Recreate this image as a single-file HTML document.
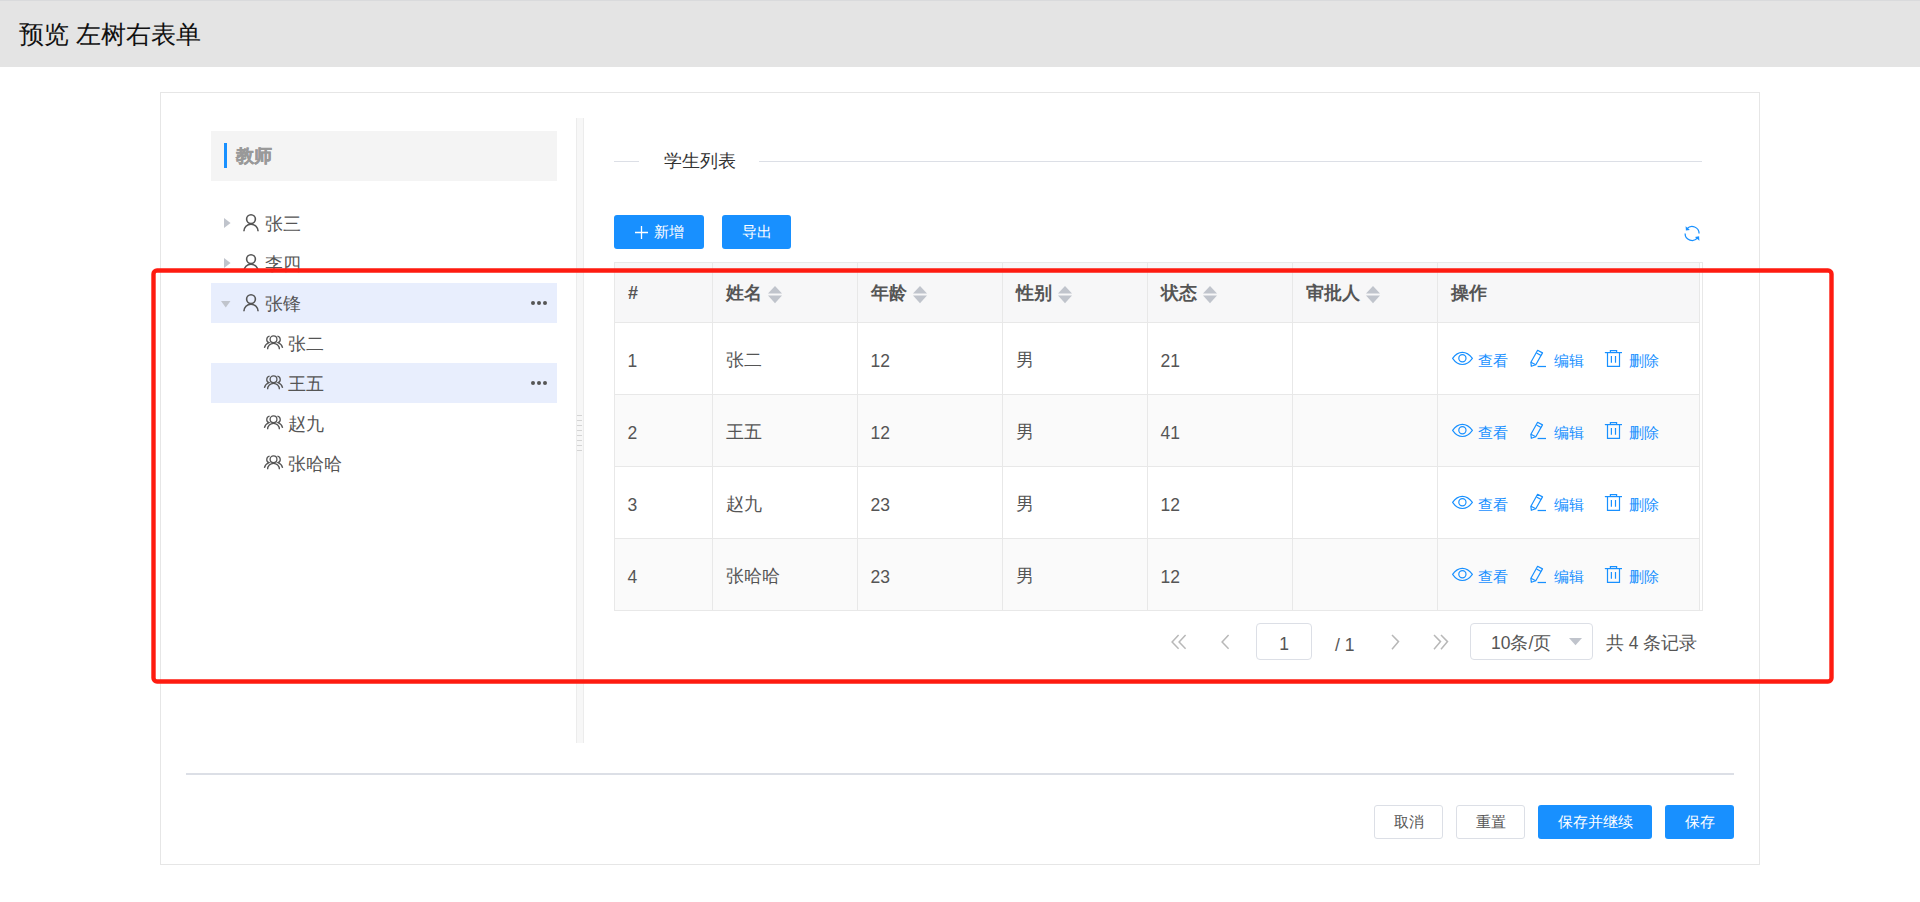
<!DOCTYPE html>
<html><head><meta charset="utf-8"><style>
*{box-sizing:border-box;margin:0;padding:0}
html,body{width:1920px;height:902px;overflow:hidden;background:#fff;font-family:"Liberation Sans",sans-serif;color:#555}
.a{position:absolute}
.hdr{left:0;top:0;width:1920px;height:67px;background:#e4e4e4;border-top:1px solid #d9dadc}
.ttl{left:19px;top:18px;font-size:25px;line-height:32px;color:#111;white-space:nowrap}
.card{left:160px;top:92px;width:1600px;height:773px;border:1px solid #e6e6e6}
.tbox{left:211px;top:131px;width:346px;height:50px;background:#f4f4f4}
.bar{left:224px;top:143px;width:3px;height:25px;background:#1890ff}
.tt{left:236px;top:144px;font-size:18px;line-height:24px;font-weight:bold;color:#999;-webkit-text-stroke:0.35px #999}
.row{height:40px;left:211px;width:346px}
.hl{background:#e8eefd}
.txt{font-size:18px;line-height:24px;color:#555;white-space:nowrap}
.split{left:576px;top:118px;width:8px;height:625px;background:#f7f7f7;border-left:1px solid #ececec;border-right:1px solid #ececec}
.grip{left:577px;width:5px;height:1.5px;background:#d4d4d4}
.dline{height:1px;background:#dcdfe6;top:161px}
.btn{height:34px;border-radius:3px;background:#1890ff;color:#fff;font-size:15px;line-height:34px;text-align:center;white-space:nowrap}
.btnw{height:34px;border-radius:3px;background:#fff;border:1px solid #dcdfe6;color:#555;font-size:15px;line-height:32px;text-align:center;white-space:nowrap}
.tbl{left:614px;top:262px;width:1089px;height:349px;border:1px solid #e8e8e8;background:#fff}
.hrow{left:615px;top:263px;width:1084px;height:59px;background:#f7f7f8}
.hcell{font-size:18px;font-weight:bold;color:#555;line-height:24px;white-space:nowrap}
.vl{width:1px;background:#e8e8e8}
.hl2{height:1px;background:#e8e8e8}
.stripe{left:615px;width:1084px;height:71px;background:#fafafa}
.cell{font-size:18px;line-height:24px;color:#555;white-space:nowrap}
.act{font-size:15px;line-height:20px;color:#1890ff;white-space:nowrap}
.pg{font-size:17.5px;line-height:24px;color:#555;white-space:nowrap}
.box{height:37px;border:1px solid #dcdfe6;border-radius:4px;background:#fff}
</style></head><body>
<div class="a hdr"></div>
<div class="a ttl">预览 左树右表单</div>
<div class="a card"></div>
<div class="a tbox"></div><div class="a bar"></div><div class="a tt">教师</div>
<div class="a row hl" style="top:283px"></div><div class="a row hl" style="top:363px"></div>
<svg class="a" style="left:224px;top:218.2px" width="8" height="11"><path d="M0 0 L6.6 5 L0 10Z" fill="#c0c4cc"/></svg>
<svg class="a" style="left:242px;top:213px" width="18" height="19" viewBox="0 0 18 19"><circle cx="9" cy="6.1" r="4.4" fill="none" stroke="#555" stroke-width="1.6"/><path d="M1.9 18.3 A7.1 7.1 0 0 1 16.1 18.3" fill="none" stroke="#555" stroke-width="1.6"/></svg>
<div class="a txt" style="left:265px;top:212px">张三</div>
<svg class="a" style="left:224px;top:258.2px" width="8" height="11"><path d="M0 0 L6.6 5 L0 10Z" fill="#c0c4cc"/></svg>
<svg class="a" style="left:242px;top:253px" width="18" height="19" viewBox="0 0 18 19"><circle cx="9" cy="6.1" r="4.4" fill="none" stroke="#555" stroke-width="1.6"/><path d="M1.9 18.3 A7.1 7.1 0 0 1 16.1 18.3" fill="none" stroke="#555" stroke-width="1.6"/></svg>
<div class="a txt" style="left:265px;top:252px">李四</div>
<svg class="a" style="left:221px;top:301px" width="11" height="8"><path d="M0 0 L9.5 0 L4.75 6.5Z" fill="#c0c4cc"/></svg>
<svg class="a" style="left:242px;top:293px" width="18" height="19" viewBox="0 0 18 19"><circle cx="9" cy="6.1" r="4.4" fill="none" stroke="#555" stroke-width="1.6"/><path d="M1.9 18.3 A7.1 7.1 0 0 1 16.1 18.3" fill="none" stroke="#555" stroke-width="1.6"/></svg>
<div class="a txt" style="left:265px;top:292px">张锋</div>
<div class="a" style="left:530.8px;top:300.8px;width:4.4px;height:4.4px;border-radius:50%;background:#555"></div><div class="a" style="left:536.8px;top:300.8px;width:4.4px;height:4.4px;border-radius:50%;background:#555"></div><div class="a" style="left:542.8px;top:300.8px;width:4.4px;height:4.4px;border-radius:50%;background:#555"></div>
<svg class="a" style="left:263px;top:334px" width="21" height="17" viewBox="0 0 21 17"><circle cx="10.5" cy="5.3" r="3.4" fill="none" stroke="#555" stroke-width="1.3"/><path d="M4.6 15.2 A5.9 5.9 0 0 1 16.4 15.2" fill="none" stroke="#555" stroke-width="1.3"/><path d="M6.56 2.15 A3.4 3.4 0 0 0 5.99 8.69 Q2.2 10.2 1.4 13.8" fill="none" stroke="#555" stroke-width="1.3"/><path d="M14.44 2.15 A3.4 3.4 0 0 1 15.01 8.69 Q18.8 10.2 19.6 13.8" fill="none" stroke="#555" stroke-width="1.3"/></svg>
<div class="a txt" style="left:288px;top:332px">张二</div>
<svg class="a" style="left:263px;top:374px" width="21" height="17" viewBox="0 0 21 17"><circle cx="10.5" cy="5.3" r="3.4" fill="none" stroke="#555" stroke-width="1.3"/><path d="M4.6 15.2 A5.9 5.9 0 0 1 16.4 15.2" fill="none" stroke="#555" stroke-width="1.3"/><path d="M6.56 2.15 A3.4 3.4 0 0 0 5.99 8.69 Q2.2 10.2 1.4 13.8" fill="none" stroke="#555" stroke-width="1.3"/><path d="M14.44 2.15 A3.4 3.4 0 0 1 15.01 8.69 Q18.8 10.2 19.6 13.8" fill="none" stroke="#555" stroke-width="1.3"/></svg>
<div class="a txt" style="left:288px;top:372px">王五</div>
<svg class="a" style="left:263px;top:414px" width="21" height="17" viewBox="0 0 21 17"><circle cx="10.5" cy="5.3" r="3.4" fill="none" stroke="#555" stroke-width="1.3"/><path d="M4.6 15.2 A5.9 5.9 0 0 1 16.4 15.2" fill="none" stroke="#555" stroke-width="1.3"/><path d="M6.56 2.15 A3.4 3.4 0 0 0 5.99 8.69 Q2.2 10.2 1.4 13.8" fill="none" stroke="#555" stroke-width="1.3"/><path d="M14.44 2.15 A3.4 3.4 0 0 1 15.01 8.69 Q18.8 10.2 19.6 13.8" fill="none" stroke="#555" stroke-width="1.3"/></svg>
<div class="a txt" style="left:288px;top:412px">赵九</div>
<svg class="a" style="left:263px;top:454px" width="21" height="17" viewBox="0 0 21 17"><circle cx="10.5" cy="5.3" r="3.4" fill="none" stroke="#555" stroke-width="1.3"/><path d="M4.6 15.2 A5.9 5.9 0 0 1 16.4 15.2" fill="none" stroke="#555" stroke-width="1.3"/><path d="M6.56 2.15 A3.4 3.4 0 0 0 5.99 8.69 Q2.2 10.2 1.4 13.8" fill="none" stroke="#555" stroke-width="1.3"/><path d="M14.44 2.15 A3.4 3.4 0 0 1 15.01 8.69 Q18.8 10.2 19.6 13.8" fill="none" stroke="#555" stroke-width="1.3"/></svg>
<div class="a txt" style="left:288px;top:452px">张哈哈</div>
<div class="a" style="left:530.8px;top:380.8px;width:4.4px;height:4.4px;border-radius:50%;background:#555"></div><div class="a" style="left:536.8px;top:380.8px;width:4.4px;height:4.4px;border-radius:50%;background:#555"></div><div class="a" style="left:542.8px;top:380.8px;width:4.4px;height:4.4px;border-radius:50%;background:#555"></div>
<div class="a split"></div>
<div class="a grip" style="top:414.5px"></div>
<div class="a grip" style="top:419.5px"></div>
<div class="a grip" style="top:424.5px"></div>
<div class="a grip" style="top:429.5px"></div>
<div class="a grip" style="top:434.5px"></div>
<div class="a grip" style="top:439.5px"></div>
<div class="a grip" style="top:444.5px"></div>
<div class="a grip" style="top:449.5px"></div>
<div class="a dline" style="left:614px;width:25px"></div>
<div class="a txt" style="left:664px;top:149px;color:#333;font-size:17.5px">学生列表</div>
<div class="a dline" style="left:759px;width:943px"></div>
<div class="a btn" style="left:614px;top:215px;width:90px"><svg style="position:absolute;left:21px;top:11px" width="13" height="13"><path d="M6.5 0 V13 M0 6.5 H13" stroke="#fff" stroke-width="1.3"/></svg><span style="position:absolute;left:40px;top:0">新增</span></div>
<div class="a btn" style="left:722px;top:215px;width:69px">导出</div>
<svg class="a" style="left:1680px;top:220px" width="26" height="26" viewBox="0 0 26 26"><path d="M6.98 8.73 A7 7 0 0 1 19.1 13.5" fill="none" stroke="#1890ff" stroke-width="1.25"/><path d="M5.1 13.5 A7 7 0 0 0 17.69 17.71" fill="none" stroke="#1890ff" stroke-width="1.25"/><path d="M5.6 6.2 L5.9 10.5 L9.9 10.1Z" fill="#1890ff"/><path d="M19.4 20.8 L19.1 16.2 L14.9 16.9Z" fill="#1890ff"/></svg>
<div class="a tbl"></div>
<div class="a hrow"></div>
<div class="a stripe" style="top:395px"></div>
<div class="a stripe" style="top:539px"></div>
<div class="a hl2" style="left:615px;top:322px;width:1084px"></div>
<div class="a hl2" style="left:615px;top:394px;width:1084px"></div>
<div class="a hl2" style="left:615px;top:466px;width:1084px"></div>
<div class="a hl2" style="left:615px;top:538px;width:1084px"></div>
<div class="a vl" style="left:712px;top:263px;height:347px"></div>
<div class="a vl" style="left:857px;top:263px;height:347px"></div>
<div class="a vl" style="left:1002px;top:263px;height:347px"></div>
<div class="a vl" style="left:1147px;top:263px;height:347px"></div>
<div class="a vl" style="left:1292px;top:263px;height:347px"></div>
<div class="a vl" style="left:1437px;top:263px;height:347px"></div>
<div class="a vl" style="left:1699px;top:263px;height:347px"></div>
<div class="a hcell" style="left:628px;top:281px">#</div>
<div class="a hcell" style="left:726px;top:281px">姓名</div>
<svg class="a" style="left:768.0px;top:286.3px" width="15" height="18"><path d="M0 7.6 L7 0 L14 7.6Z" fill="#c0c4cc"/><path d="M0 9.6 L14 9.6 L7 17.2Z" fill="#c0c4cc"/></svg>
<div class="a hcell" style="left:871px;top:281px">年龄</div>
<svg class="a" style="left:913.0px;top:286.3px" width="15" height="18"><path d="M0 7.6 L7 0 L14 7.6Z" fill="#c0c4cc"/><path d="M0 9.6 L14 9.6 L7 17.2Z" fill="#c0c4cc"/></svg>
<div class="a hcell" style="left:1016px;top:281px">性别</div>
<svg class="a" style="left:1058.0px;top:286.3px" width="15" height="18"><path d="M0 7.6 L7 0 L14 7.6Z" fill="#c0c4cc"/><path d="M0 9.6 L14 9.6 L7 17.2Z" fill="#c0c4cc"/></svg>
<div class="a hcell" style="left:1161px;top:281px">状态</div>
<svg class="a" style="left:1203.0px;top:286.3px" width="15" height="18"><path d="M0 7.6 L7 0 L14 7.6Z" fill="#c0c4cc"/><path d="M0 9.6 L14 9.6 L7 17.2Z" fill="#c0c4cc"/></svg>
<div class="a hcell" style="left:1306px;top:281px">审批人</div>
<svg class="a" style="left:1365.5px;top:286.3px" width="15" height="18"><path d="M0 7.6 L7 0 L14 7.6Z" fill="#c0c4cc"/><path d="M0 9.6 L14 9.6 L7 17.2Z" fill="#c0c4cc"/></svg>
<div class="a hcell" style="left:1451px;top:281px">操作</div>
<div class="a cell" style="left:627.5px;top:348.5px;font-size:17.5px">1</div>
<div class="a cell" style="left:726px;top:348px">张二</div>
<div class="a cell" style="left:870.5px;top:348.5px;font-size:17.5px">12</div>
<div class="a cell" style="left:1016px;top:348px">男</div>
<div class="a cell" style="left:1160.5px;top:348.5px;font-size:17.5px">21</div>
<svg class="a" style="left:1451px;top:350px" width="23" height="17" viewBox="0 0 23 17"><path d="M1.6 8.4 C4.5 4.2 7.5 2.3 11.4 2.3 C15.3 2.3 18.3 4.2 21.4 8.4 C18.3 12.6 15.3 14.5 11.4 14.5 C7.5 14.5 4.5 12.6 1.6 8.4Z" fill="none" stroke="#1890ff" stroke-width="1.15" stroke-linejoin="round"/><circle cx="11.4" cy="8.3" r="3.6" fill="none" stroke="#1890ff" stroke-width="1.2"/></svg>
<div class="a act" style="left:1478px;top:351px">查看</div>
<svg class="a" style="left:1529px;top:348px" width="19" height="20" viewBox="0 0 19 20"><path d="M8.6 2.3 L13.5 4.9 L6.8 16.8 L2.3 18.3 L1.9 14.3 Z" fill="none" stroke="#1890ff" stroke-width="1.2" stroke-linejoin="round"/><path d="M7.5 4.9 L12.1 7.5 M1.9 14.3 L6.8 16.8" fill="none" stroke="#1890ff" stroke-width="1.2" stroke-linejoin="round"/><path d="M8.6 18.5 H17" stroke="#1890ff" stroke-width="1.25"/></svg>
<div class="a act" style="left:1554px;top:351px">编辑</div>
<svg class="a" style="left:1604px;top:349px" width="20" height="20" viewBox="0 0 20 20"><path d="M0.85 3.6 H18" fill="none" stroke="#1890ff" stroke-width="1.2"/><path d="M6.4 3.6 V1.6 H12.6 V3.6" fill="none" stroke="#1890ff" stroke-width="1.2"/><path d="M3.5 3.6 V17.3 H15.5 V3.6" fill="none" stroke="#1890ff" stroke-width="1.2"/><path d="M7.4 7.1 V13.7 M11.5 7.1 V13.7" fill="none" stroke="#1890ff" stroke-width="1.2"/></svg>
<div class="a act" style="left:1629px;top:351px">删除</div>
<div class="a cell" style="left:627.5px;top:420.5px;font-size:17.5px">2</div>
<div class="a cell" style="left:726px;top:420px">王五</div>
<div class="a cell" style="left:870.5px;top:420.5px;font-size:17.5px">12</div>
<div class="a cell" style="left:1016px;top:420px">男</div>
<div class="a cell" style="left:1160.5px;top:420.5px;font-size:17.5px">41</div>
<svg class="a" style="left:1451px;top:422px" width="23" height="17" viewBox="0 0 23 17"><path d="M1.6 8.4 C4.5 4.2 7.5 2.3 11.4 2.3 C15.3 2.3 18.3 4.2 21.4 8.4 C18.3 12.6 15.3 14.5 11.4 14.5 C7.5 14.5 4.5 12.6 1.6 8.4Z" fill="none" stroke="#1890ff" stroke-width="1.15" stroke-linejoin="round"/><circle cx="11.4" cy="8.3" r="3.6" fill="none" stroke="#1890ff" stroke-width="1.2"/></svg>
<div class="a act" style="left:1478px;top:423px">查看</div>
<svg class="a" style="left:1529px;top:420px" width="19" height="20" viewBox="0 0 19 20"><path d="M8.6 2.3 L13.5 4.9 L6.8 16.8 L2.3 18.3 L1.9 14.3 Z" fill="none" stroke="#1890ff" stroke-width="1.2" stroke-linejoin="round"/><path d="M7.5 4.9 L12.1 7.5 M1.9 14.3 L6.8 16.8" fill="none" stroke="#1890ff" stroke-width="1.2" stroke-linejoin="round"/><path d="M8.6 18.5 H17" stroke="#1890ff" stroke-width="1.25"/></svg>
<div class="a act" style="left:1554px;top:423px">编辑</div>
<svg class="a" style="left:1604px;top:421px" width="20" height="20" viewBox="0 0 20 20"><path d="M0.85 3.6 H18" fill="none" stroke="#1890ff" stroke-width="1.2"/><path d="M6.4 3.6 V1.6 H12.6 V3.6" fill="none" stroke="#1890ff" stroke-width="1.2"/><path d="M3.5 3.6 V17.3 H15.5 V3.6" fill="none" stroke="#1890ff" stroke-width="1.2"/><path d="M7.4 7.1 V13.7 M11.5 7.1 V13.7" fill="none" stroke="#1890ff" stroke-width="1.2"/></svg>
<div class="a act" style="left:1629px;top:423px">删除</div>
<div class="a cell" style="left:627.5px;top:492.5px;font-size:17.5px">3</div>
<div class="a cell" style="left:726px;top:492px">赵九</div>
<div class="a cell" style="left:870.5px;top:492.5px;font-size:17.5px">23</div>
<div class="a cell" style="left:1016px;top:492px">男</div>
<div class="a cell" style="left:1160.5px;top:492.5px;font-size:17.5px">12</div>
<svg class="a" style="left:1451px;top:494px" width="23" height="17" viewBox="0 0 23 17"><path d="M1.6 8.4 C4.5 4.2 7.5 2.3 11.4 2.3 C15.3 2.3 18.3 4.2 21.4 8.4 C18.3 12.6 15.3 14.5 11.4 14.5 C7.5 14.5 4.5 12.6 1.6 8.4Z" fill="none" stroke="#1890ff" stroke-width="1.15" stroke-linejoin="round"/><circle cx="11.4" cy="8.3" r="3.6" fill="none" stroke="#1890ff" stroke-width="1.2"/></svg>
<div class="a act" style="left:1478px;top:495px">查看</div>
<svg class="a" style="left:1529px;top:492px" width="19" height="20" viewBox="0 0 19 20"><path d="M8.6 2.3 L13.5 4.9 L6.8 16.8 L2.3 18.3 L1.9 14.3 Z" fill="none" stroke="#1890ff" stroke-width="1.2" stroke-linejoin="round"/><path d="M7.5 4.9 L12.1 7.5 M1.9 14.3 L6.8 16.8" fill="none" stroke="#1890ff" stroke-width="1.2" stroke-linejoin="round"/><path d="M8.6 18.5 H17" stroke="#1890ff" stroke-width="1.25"/></svg>
<div class="a act" style="left:1554px;top:495px">编辑</div>
<svg class="a" style="left:1604px;top:493px" width="20" height="20" viewBox="0 0 20 20"><path d="M0.85 3.6 H18" fill="none" stroke="#1890ff" stroke-width="1.2"/><path d="M6.4 3.6 V1.6 H12.6 V3.6" fill="none" stroke="#1890ff" stroke-width="1.2"/><path d="M3.5 3.6 V17.3 H15.5 V3.6" fill="none" stroke="#1890ff" stroke-width="1.2"/><path d="M7.4 7.1 V13.7 M11.5 7.1 V13.7" fill="none" stroke="#1890ff" stroke-width="1.2"/></svg>
<div class="a act" style="left:1629px;top:495px">删除</div>
<div class="a cell" style="left:627.5px;top:564.5px;font-size:17.5px">4</div>
<div class="a cell" style="left:726px;top:564px">张哈哈</div>
<div class="a cell" style="left:870.5px;top:564.5px;font-size:17.5px">23</div>
<div class="a cell" style="left:1016px;top:564px">男</div>
<div class="a cell" style="left:1160.5px;top:564.5px;font-size:17.5px">12</div>
<svg class="a" style="left:1451px;top:566px" width="23" height="17" viewBox="0 0 23 17"><path d="M1.6 8.4 C4.5 4.2 7.5 2.3 11.4 2.3 C15.3 2.3 18.3 4.2 21.4 8.4 C18.3 12.6 15.3 14.5 11.4 14.5 C7.5 14.5 4.5 12.6 1.6 8.4Z" fill="none" stroke="#1890ff" stroke-width="1.15" stroke-linejoin="round"/><circle cx="11.4" cy="8.3" r="3.6" fill="none" stroke="#1890ff" stroke-width="1.2"/></svg>
<div class="a act" style="left:1478px;top:567px">查看</div>
<svg class="a" style="left:1529px;top:564px" width="19" height="20" viewBox="0 0 19 20"><path d="M8.6 2.3 L13.5 4.9 L6.8 16.8 L2.3 18.3 L1.9 14.3 Z" fill="none" stroke="#1890ff" stroke-width="1.2" stroke-linejoin="round"/><path d="M7.5 4.9 L12.1 7.5 M1.9 14.3 L6.8 16.8" fill="none" stroke="#1890ff" stroke-width="1.2" stroke-linejoin="round"/><path d="M8.6 18.5 H17" stroke="#1890ff" stroke-width="1.25"/></svg>
<div class="a act" style="left:1554px;top:567px">编辑</div>
<svg class="a" style="left:1604px;top:565px" width="20" height="20" viewBox="0 0 20 20"><path d="M0.85 3.6 H18" fill="none" stroke="#1890ff" stroke-width="1.2"/><path d="M6.4 3.6 V1.6 H12.6 V3.6" fill="none" stroke="#1890ff" stroke-width="1.2"/><path d="M3.5 3.6 V17.3 H15.5 V3.6" fill="none" stroke="#1890ff" stroke-width="1.2"/><path d="M7.4 7.1 V13.7 M11.5 7.1 V13.7" fill="none" stroke="#1890ff" stroke-width="1.2"/></svg>
<div class="a act" style="left:1629px;top:567px">删除</div>
<svg class="a" style="left:1171px;top:634.4px" width="20" height="17" viewBox="0 0 20 17"><path d="M7.6 1 L1.1 8 L7.6 14.8" fill="none" stroke="#b8b8b8" stroke-width="1.5"/><path d="M14.6 1 L8.1 8 L14.6 14.8" fill="none" stroke="#b8b8b8" stroke-width="1.5"/></svg>
<svg class="a" style="left:1221.4px;top:634.4px" width="20" height="17" viewBox="0 0 20 17"><path d="M7.6 1 L1.1 8 L7.6 14.8" fill="none" stroke="#b8b8b8" stroke-width="1.5"/></svg>
<div class="a box" style="left:1256px;top:623px;width:56px"></div>
<div class="a pg" style="left:1256px;top:631.5px;width:56px;text-align:center">1</div>
<div class="a pg" style="left:1335px;top:633px">/ 1</div>
<svg class="a" style="left:1390.5px;top:634.3px" width="20" height="17" viewBox="0 0 20 17"><path d="M1 1 L7.5 7.6 L1 15.2" fill="none" stroke="#b8b8b8" stroke-width="1.5"/></svg>
<svg class="a" style="left:1432.5px;top:634.3px" width="20" height="17" viewBox="0 0 20 17"><path d="M1 1 L7.5 7.6 L1 15.2" fill="none" stroke="#b8b8b8" stroke-width="1.5"/><path d="M8 1 L14.5 7.6 L8 15.2" fill="none" stroke="#b8b8b8" stroke-width="1.5"/></svg>
<div class="a box" style="left:1470px;top:623px;width:123px"></div>
<div class="a pg" style="left:1491px;top:631px">10条/页</div>
<svg class="a" style="left:1568.5px;top:638px" width="14" height="8"><path d="M0 0 L13 0 L6.5 7.2Z" fill="#c0c4cc"/></svg>
<div class="a pg" style="left:1606px;top:631px">共 4 条记录</div>
<div class="a" style="left:186px;top:773px;width:1548px;height:2px;background:#dcdfe6"></div>
<div class="a btnw" style="left:1374px;top:805px;width:69px">取消</div>
<div class="a btnw" style="left:1456px;top:805px;width:69px">重置</div>
<div class="a btn" style="left:1538px;top:805px;width:114px">保存并继续</div>
<div class="a btn" style="left:1665px;top:805px;width:69px">保存</div>
<svg class="a" style="left:0;top:0" width="1920" height="902"><rect x="153.5" y="270.5" width="1678" height="411" rx="3.5" fill="none" stroke="#fe1b10" stroke-width="4.4"/></svg>
</body></html>
